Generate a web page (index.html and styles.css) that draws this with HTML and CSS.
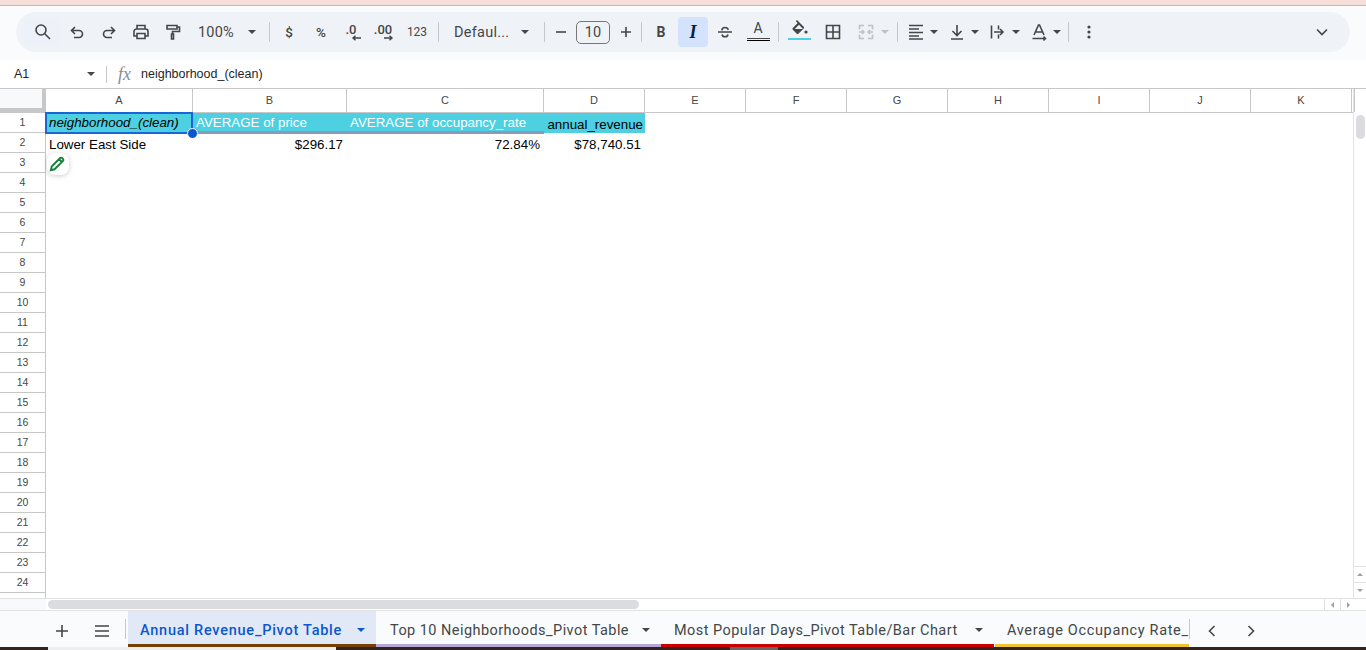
FILE: index.html
```html
<!DOCTYPE html>
<html lang="en">

<head>
    <meta charset="UTF-8">
    <meta name="viewport" content="width=device-width, initial-scale=1.0">
    <title>Annual Revenue_Pivot Table</title>
    <link rel="stylesheet" href="styles.css">
</head>

<body>
    <div class="top-strip"></div>

    <div class="toolbar-wrap">
        <div class="toolbar">
            <div class="btn btn-search">
                <svg class="ic" viewBox="0 0 20 20"><circle cx="8" cy="8" r="5" /><path d="M11.8 11.8L17 17" /></svg>
            </div>
            <div class="btn">
                <svg class="ic" viewBox="0 0 20 20"><path d="M8 5L4.500 8.500 8 12M4.500 8.500H12a3.500 3.500 0 0 1 0 7H7" /></svg>
            </div>
            <div class="btn">
                <svg class="ic" viewBox="0 0 20 20"><path d="M12 5l3.500 3.500L12 12M15.500 8.500H8a3.500 3.500 0 0 0 0 7h5" /></svg>
            </div>
            <div class="btn">
                <svg class="ic" viewBox="0 0 20 20"><path d="M6 7V3.500h8V7M6 14H3V9.500A2.500 2.500 0 0 1 5.500 7h9A2.500 2.500 0 0 1 17 9.500V14h-3M6 11.500h8v5H6z" /></svg>
            </div>
            <div class="btn">
                <svg class="ic" viewBox="0 0 20 20"><path d="M4 3.500h10v3.500H4zM14 5h2.500v4.500H9.500V12M8.500 12h2v5h-2z" /></svg>
            </div>
            <div class="zoom-select">
                <span>100%</span>
                <i class="caret"></i>
            </div>
            <div class="sep sep-a"></div>
            <div class="btn txt">$</div>
            <div class="btn txt">%</div>
            <div class="btn dec">
                <span>.0</span>
                <svg viewBox="0 0 12 6"><path d="M11 3H3M5.500 .8L3 3l2.500 2.200" /></svg>
            </div>
            <div class="btn dec">
                <span>.00</span>
                <svg viewBox="0 0 12 6"><path d="M2 3h8M7.500 .8L10 3 7.500 5.200" /></svg>
            </div>
            <div class="btn txt small">123</div>
            <div class="sep sep-g"></div>
            <div class="font-select">
                <span>Defaul...</span>
                <i class="caret"></i>
            </div>
            <div class="sep sep-f"></div>
            <div class="btn-s">
                <svg class="ic" viewBox="0 0 20 20"><path d="M5 10h10" /></svg>
            </div>
            <div class="size-box">10</div>
            <div class="btn-s">
                <svg class="ic" viewBox="0 0 20 20"><path d="M5 10h10M10 5v10" /></svg>
            </div>
            <div class="sep sep-b"></div>
            <div class="btn txt bold">B</div>
            <div class="btn-on">I</div>
            <div class="btn">
                <svg class="ic" viewBox="0 0 20 20"><path d="M3 10h14M6.800 8.300C7 6.300 8.300 5.500 10 5.500s3 .8 3.200 2.300M7 12.500c.3 1.500 1.400 2.200 3 2.200s2.700-.7 3-2.200" /></svg>
            </div>
            <div class="btn color-a">
                <span>A</span>
                <i class="line-dark"></i>
                <i class="line-black"></i>
            </div>
            <div class="sep sep-c"></div>
            <div class="btn color-fill">
                <svg viewBox="0 0 20 16"><path class="solid" d="M8 1L6.800 2.200 8.700 4.100 3.800 9c-.5.5-.5 1.200 0 1.700l4 4c.5.400 1.200.400 1.600 0l5.300-5.200c.5-.5.500-1.200 0-1.700L8 1zm-2.200 9L10 5.700 14 10z" /><circle class="solid" cx="17" cy="13" r="1.600" /></svg>
                <i class="line-cyan"></i>
            </div>
            <div class="btn btn-borders">
                <svg class="ic" viewBox="0 0 20 20"><path d="M3.500 3.500h13v13h-13zM10 3.500v13M3.500 10h13" /></svg>
            </div>
            <div class="btn merge">
                <svg class="ic ic-off" viewBox="0 0 20 20"><path d="M8 3.500H3.500v4M3.500 12.500v4H8M12 3.500h4.500v4M16.500 12.500v4H12M3 10h5M6 8l2 2-2 2M17 10h-5M14 8l-2 2 2 2" /></svg>
                <i class="caret caret-off"></i>
            </div>
            <div class="sep sep-d"></div>
            <div class="btn-c">
                <svg class="ic" viewBox="0 0 20 20"><path d="M3 3.500h14M3 7h10M3 10.500h14M3 14h10M3 17h14" /></svg>
                <i class="caret"></i>
            </div>
            <div class="btn-c">
                <svg class="ic" viewBox="0 0 20 20"><path d="M10 3v10M5.500 9L10 13.500 14.500 9M4 17h12" /></svg>
                <i class="caret"></i>
            </div>
            <div class="btn-c">
                <svg class="ic" viewBox="0 0 20 20"><path d="M3.500 3.500v13M10.500 3.500v4M10.500 12.500v4M6 10h9M12 7l3 3-3 3" /></svg>
                <i class="caret"></i>
            </div>
            <div class="btn-c">
                <svg class="ic" viewBox="0 0 20 20"><path d="M5 13L9.500 3h1L15 13M6.500 10h7M3.500 16.500h13M14.500 14.500l2 2-2 2" /></svg>
                <i class="caret"></i>
            </div>
            <div class="sep sep-e"></div>
            <div class="btn">
                <svg viewBox="0 0 20 20" class="dots"><circle cx="10" cy="5" r="1.600" /><circle cx="10" cy="10" r="1.600" /><circle cx="10" cy="15" r="1.600" /></svg>
            </div>
            <div class="btn btn-end">
                <svg class="ic" viewBox="0 0 20 20"><path d="M5 7.500l5 5 5-5" /></svg>
            </div>
        </div>
    </div>

    <div class="formula-bar">
        <div class="name-box">
            <span>A1</span>
            <i class="caret"></i>
        </div>
        <div class="fx-sep"></div>
        <span class="fx">fx</span>
        <span class="formula-text">neighborhood_(clean)</span>
    </div>

    <div class="sheet">
        <div class="sheet-main">
            <div class="col-head">
                <div class="corner"></div>
                <div class="col w-a">A</div>
                <div class="col w-b">B</div>
                <div class="col w-c">C</div>
                <div class="col w-d">D</div>
                <div class="col">E</div>
                <div class="col">F</div>
                <div class="col">G</div>
                <div class="col">H</div>
                <div class="col">I</div>
                <div class="col">J</div>
                <div class="col">K</div>
                <div class="col w-end"></div>
            </div>
            <div class="sheet-body">
                <div class="row-head">
                    <div>1</div><div>2</div><div>3</div><div>4</div><div>5</div><div>6</div>
                    <div>7</div><div>8</div><div>9</div><div>10</div><div>11</div><div>12</div>
                    <div>13</div><div>14</div><div>15</div><div>16</div><div>17</div><div>18</div>
                    <div>19</div><div>20</div><div>21</div><div>22</div><div>23</div><div>24</div>
                </div>
                <div class="cells">
                    <div class="cell-row head-row">
                        <div class="cell w-a head a1">neighborhood_(clean)</div>
                        <div class="cell w-b head pivot">AVERAGE of price</div>
                        <div class="cell w-c head pivot">AVERAGE of occupancy_rate</div>
                        <div class="cell w-d head plain">annual_revenue</div>
                    </div>
                    <div class="cell-row">
                        <div class="cell w-a">Lower East Side</div>
                        <div class="cell w-b num">$296.17</div>
                        <div class="cell w-c num">72.84%</div>
                        <div class="cell w-d num">$78,740.51</div>
                    </div>
                    <div class="select-box"><i class="handle"></i></div>
                    <div class="pencil-chip">
                        <svg viewBox="0 0 16 16"><path d="M2.500 13.500l.8-3.300 7.500-7.500a1.200 1.200 0 0 1 1.700 0l.8.8a1.200 1.200 0 0 1 0 1.700l-7.500 7.500zM9.800 3.700l2.500 2.500" /></svg>
                    </div>
                </div>
            </div>
        </div>
        <div class="v-scroll">
            <div class="v-thumb"></div>
            <div class="v-arrows">
                <div class="arrow-cell"><i class="tri-up"></i></div>
                <div class="arrow-cell"><i class="tri-down"></i></div>
            </div>
        </div>
    </div>

    <div class="h-scroll">
        <div class="h-thumb"></div>
        <div class="h-arrows">
            <div class="arrow-cell"><i class="tri-left"></i></div>
            <div class="arrow-cell"><i class="tri-right"></i></div>
        </div>
    </div>

    <div class="tabs">
        <div class="tab-tools">
            <svg class="ic" viewBox="0 0 20 20"><path d="M4 10h12M10 4v12" /></svg>
            <svg class="ic" viewBox="0 0 20 20"><path d="M3 5h14M3 10h14M3 15h14" /></svg>
        </div>
        <div class="tab-sep"></div>
        <div class="tab tab-1 active"><span>Annual Revenue_Pivot Table</span><i class="caret"></i></div>
        <div class="tab tab-2"><span>Top 10 Neighborhoods_Pivot Table</span><i class="caret"></i></div>
        <div class="tab tab-3"><span>Most Popular Days_Pivot Table/Bar Chart</span><i class="caret"></i></div>
        <div class="tab tab-4"><span>Average Occupancy Rate_</span></div>
        <div class="tab-sep"></div>
        <div class="tab-nav">
            <svg class="ic" viewBox="0 0 20 20"><path d="M12.500 5l-5 5 5 5" /></svg>
            <svg class="ic" viewBox="0 0 20 20"><path d="M7.500 5l5 5-5 5" /></svg>
        </div>
    </div>

    <div class="bottom-strip">
        <div class="seg-dark s1"></div>
        <div class="seg-light"></div>
        <div class="seg-dark s2"></div>
        <div class="seg-grey"></div>
        <div class="seg-dark s3"></div>
    </div>
</body>
</html>
```

FILE: styles.css
```css
* {
    box-sizing: border-box;
}

html,
body {
    height: 650px;
    overflow: hidden;
}

body {
    margin: 0;
    display: flex;
    flex-direction: column;
    background: #fff;
    font-family: 'Liberation Sans', Arial, sans-serif;
    color: #444746;
}

i {
    display: block;
}

svg {
    display: block;
    flex: none;
}

.ic {
    width: 20px;
    height: 20px;
    fill: none;
    stroke: #444746;
    stroke-width: 1.6;
}

.caret {
    width: 0;
    height: 0;
    flex: none;
    border-left: 4px solid transparent;
    border-right: 4px solid transparent;
    border-top: 4px solid #444746;
}

/* top bit of the browser */
.top-strip {
    height: 6px;
    flex: none;
    background: #f5dfd8;
    border-bottom: 1px solid #c9b8b2;
}

.toolbar-wrap {
    height: 54px;
    flex: none;
    padding: 6px 16px 8px;
    background: #f9fbfd;
}

.toolbar {
    height: 40px;
    display: flex;
    align-items: center;
    padding-left: 8px;
    background: #eff3f8;
    border-radius: 20px;
    font-family: Roboto, sans-serif;
}

.btn {
    width: 32px;
    height: 30px;
    flex: none;
    display: flex;
    align-items: center;
    justify-content: center;
    position: relative;
}

.btn-search {
    width: 37px;
    height: 28px;
    background: #edf1f9;
}

.btn-borders {
    margin-left: 2px;
}

.txt {
    font-size: 13.5px;
    font-weight: 500;
}

.small {
    font-size: 12px;
    font-weight: 400;
}

.bold {
    margin-left: 3px;
    margin-right: 1px;
    font-size: 14px;
    font-weight: 700;
}

.sep {
    width: 1px;
    height: 20px;
    flex: none;
    margin: 0 4px;
    background: #c7c7c7;
}

.sep-a {
    margin: 0 3px 0 7px;
}

.sep-b {
    margin: 0;
}

.sep-c {
    margin: 0 4px;
}

.sep-d {
    margin: 0 1px 0 0;
}

.sep-e {
    margin: 0 4px 0 5px;
}

.sep-f {
    margin: 0 0 0 4px;
}

.sep-g {
    margin: 0 4px 0 5px;
}

.zoom-select {
    width: 73px;
    display: flex;
    align-items: center;
    justify-content: space-between;
    padding: 0 6px 0 9px;
    font-size: 14.5px;
    letter-spacing: .2px;
}

.dec {
    flex-direction: column;
    font-size: 13px;
    font-weight: 500;
    line-height: 11px;
}

.dec span {
    margin-right: 4px;
}

.dec svg {
    width: 12px;
    height: 6px;
    margin-left: 6px;
    fill: none;
    stroke: #444746;
    stroke-width: 1.4;
}

.font-select {
    width: 97px;
    display: flex;
    align-items: center;
    justify-content: space-between;
    padding: 0 11px 0 11px;
    font-size: 14.5px;
    letter-spacing: .25px;
}

.btn-s {
    width: 31px;
    flex: none;
    display: flex;
    justify-content: center;
}

.size-box {
    width: 34px;
    height: 23px;
    flex: none;
    margin: 0;
    border: 1px solid #747775;
    border-radius: 5px;
    font-size: 14.5px;
    line-height: 21px;
    text-align: center;
}

.btn-on {
    width: 30px;
    height: 30px;
    flex: none;
    margin-right: 1px;
    border-radius: 4px;
    background: #d3e3fd;
    color: #041e49;
    font-family: 'Liberation Serif', serif;
    font-size: 18px;
    font-style: italic;
    font-weight: 700;
    line-height: 30px;
    text-align: center;
}

.color-a {
    flex-direction: column;
    justify-content: flex-start;
    height: 26px;
    margin-left: 1px;
    font-size: 14px;
    line-height: 14px;
    padding-top: 2px;
}

.line-dark,
.line-black {
    width: 23px;
    height: 1px;
    flex: none;
    background: #444746;
    margin-top: 3px;
}

.line-black {
    margin-top: 1px;
    background: #000;
}

.color-fill {
    flex-direction: column;
    justify-content: flex-start;
    height: 26px;
}

.color-fill svg {
    width: 20px;
    height: 16px;
}

.solid {
    fill: #444746;
    fill-rule: evenodd;
}

.line-cyan {
    width: 23px;
    height: 2px;
    margin-top: 3px;
    background: #4dd0e1;
}

.merge {
    width: 48px;
    justify-content: flex-start;
    gap: 5px;
    padding-left: 7px;
}

.ic-off {
    stroke: #bfc1c4;
}

.caret-off {
    border-top-color: #bfc1c4;
}

.btn-c {
    width: 41px;
    flex: none;
    display: flex;
    align-items: center;
    gap: 4px;
    padding-left: 7px;
}

.dots {
    width: 20px;
    height: 20px;
    fill: #444746;
}

.btn-end {
    margin-left: auto;
    margin-right: 12px;
}

/* formula bar */
.formula-bar {
    height: 29px;
    flex: none;
    display: flex;
    align-items: center;
    border-bottom: 1px solid #c7c7c7;
    color: #1f1f1f;
    font-size: 12.5px;
}

.name-box {
    width: 106px;
    display: flex;
    align-items: center;
    justify-content: space-between;
    padding: 0 11px 0 14px;
}

.fx-sep {
    width: 1px;
    height: 17px;
    background: #c7c7c7;
}

.fx {
    width: 23px;
    margin-left: 11px;
    flex: none;
    color: #8a8c8e;
    font-family: 'Liberation Serif', serif;
    font-size: 18px;
    font-style: italic;
}

/* grid */
.sheet {
    height: 510px;
    flex: none;
    display: flex;
    border-bottom: 1px solid #e1e3e1;
}

.sheet-main {
    flex: 1;
    min-width: 0;
}

.col-head {
    height: 24px;
    display: flex;
    border-bottom: 1px solid #c7c7c7;
}

.corner {
    width: 46px;
    flex: none;
    background: #f8f9fa;
    border-right: 4px solid #c7c7c7;
    border-bottom: 4px solid #c7c7c7;
}

.col {
    width: 101px;
    flex: none;
    border-right: 1px solid #c7c7c7;
    font-size: 11px;
    line-height: 23px;
    text-align: center;
    color: #444746;
}

.col.w-end {
    width: 3px;
}

.w-a {
    width: 147px;
}

.w-b {
    width: 154px;
}

.w-c {
    width: 197px;
}

.w-d {
    width: 101px;
}

.sheet-body {
    display: flex;
    height: 485px;
}

.row-head {
    width: 46px;
    flex: none;
    border-right: 1px solid #c7c7c7;
}

.row-head div {
    height: 20px;
    border-bottom: 1px solid #c7c7c7;
    font-size: 10.5px;
    line-height: 19px;
    text-align: center;
}

.cells {
    flex: 1;
    position: relative;
}

.cell-row {
    height: 20px;
    display: flex;
    color: #000;
    font-size: 13.33px;
    line-height: 22px;
}

.head-row {
    height: 21px;
}

.cell {
    flex: none;
    padding: 0 3px;
    white-space: nowrap;
    overflow: hidden;
}

.head {
    background: #4dd0e1;
    line-height: 20px;
}

.a1 {
    font-style: italic;
}

.pivot {
    color: #fff;
    border-bottom: 3px solid #8a9ab8;
}

.plain {
    height: 20px;
    line-height: 24px;
    padding: 0 2px 0 3px;
    text-align: right;
}

.num {
    padding-right: 4px;
    text-align: right;
}

.select-box {
    position: absolute;
    left: -1px;
    top: -1px;
    width: 148px;
    height: 22px;
    border: 2px solid #1a66d6;
}

.handle {
    position: absolute;
    right: -7px;
    bottom: -7px;
    width: 11px;
    height: 11px;
    border-radius: 50%;
    border: 1px solid #fff;
    background: #0b57d0;
}

.pencil-chip {
    position: absolute;
    left: 1px;
    top: 40px;
    width: 22px;
    height: 22px;
    display: flex;
    align-items: center;
    justify-content: center;
    border-radius: 8px;
    background: #fff;
    box-shadow: 0 1px 5px rgba(0, 0, 0, .2);
}

.pencil-chip svg {
    width: 18px;
    height: 18px;
    margin-left: -2px;
    fill: none;
    stroke: #188038;
    stroke-width: 1.7;
}

.v-scroll {
    width: 13px;
    flex: none;
    display: flex;
    flex-direction: column;
    border-left: 1px solid #e1e3e1;
    padding-top: 26px;
}

.v-thumb {
    width: 9px;
    height: 24px;
    margin-left: 2px;
    border-radius: 5px;
    background: #dadce0;
}

.v-arrows {
    margin-top: auto;
}

.v-arrows .arrow-cell {
    height: 16px;
    border-top: 1px solid #e1e3e1;
}

.arrow-cell {
    display: flex;
    align-items: center;
    justify-content: center;
}

.tri-up,
.tri-down,
.tri-left,
.tri-right {
    width: 0;
    height: 0;
    border: 3px solid transparent;
}

.tri-up {
    border-top: 0;
    border-bottom: 3px solid #9aa0a6;
}

.tri-down {
    border-bottom: 0;
    border-top: 3px solid #9aa0a6;
}

.tri-left {
    border-left: 0;
    border-right: 3px solid #9aa0a6;
}

.tri-right {
    border-right: 0;
    border-left: 3px solid #9aa0a6;
}

.h-scroll {
    height: 12px;
    flex: none;
    display: flex;
    align-items: center;
    padding-left: 48px;
    border-bottom: 1px solid #e1e3e1;
    background: linear-gradient(90deg, #f8f9fa 46px, #fff 46px);
}

.h-thumb {
    width: 591px;
    height: 9px;
    border-radius: 5px;
    background: #dadce0;
}

.h-arrows {
    margin-left: auto;
    margin-right: 10px;
    height: 11px;
    display: flex;
}

.h-arrows .arrow-cell {
    width: 16px;
    border-left: 1px solid #e1e3e1;
}

/* sheet tabs */
.tabs {
    height: 36px;
    flex: none;
    display: flex;
    background: #f9fbfd;
    font-family: Roboto, sans-serif;
    font-size: 14.5px;
    letter-spacing: .45px;
}

.tab-tools {
    width: 125px;
    flex: none;
    display: flex;
    align-items: center;
    gap: 20px;
    padding: 3px 0 0 52px;
}

.tab-sep {
    width: 1px;
    height: 20px;
    flex: none;
    margin: 8px 2px 0 0;
    background: #c7c7c7;
}

.tab {
    height: 36px;
    flex: none;
    display: flex;
    align-items: center;
    justify-content: space-between;
    padding: 5px 11px 0 13px;
    border-bottom: 3px solid;
    white-space: nowrap;
}

.tab-1 {
    width: 248px;
    padding-left: 12px;
    border-color: #783f04;
}

.tab-2 {
    width: 285px;
    padding-left: 14px;
    border-color: #b4a7d6;
}

.tab-3 {
    width: 333px;
    border-color: #cc0000;
    margin-right: 1px;
}

.tab-4 {
    width: 194px;
    padding-left: 12px;
    padding-right: 0;
    border-color: #f1c232;
    justify-content: flex-start;
    letter-spacing: .65px;
}

.active {
    background: #e1e9f7;
    color: #0b57d0;
    font-weight: 500;
    letter-spacing: .75px;
}

.active .caret {
    border-top-color: #0b57d0;
}

.tab-nav {
    display: flex;
    align-items: center;
    gap: 19px;
    padding: 3px 0 0 10px;
}

.bottom-strip {
    height: 3px;
    flex: none;
    display: flex;
}

.seg-dark {
    background: #33231f;
}

.s1 {
    width: 48px;
}

.s2 {
    width: 394px;
}

.s3 {
    flex: 1;
}

.seg-light {
    width: 288px;
    background: #eceeef;
}

.seg-grey {
    width: 48px;
    background: #6b6462;
}
```
